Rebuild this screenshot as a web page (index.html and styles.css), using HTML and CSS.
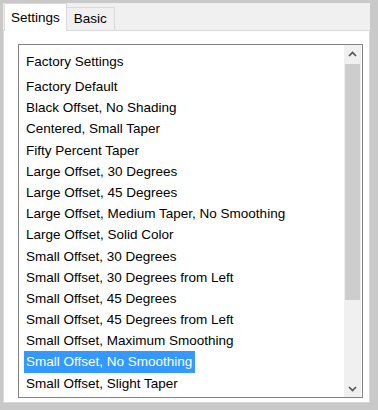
FILE: index.html
```
<!DOCTYPE html>
<html lang="en">
<head>
    <meta charset="UTF-8">
    <title>Settings</title>
    <link rel="stylesheet" href="styles.css">
</head>
<body>
    <div class="window">
        <div class="tabs">
            <div class="tab active">Settings</div>
            <div class="tab">Basic</div>
        </div>
        <div class="panel">
            <div class="listbox">
                <div class="items">
                    <div class="item header">Factory Settings</div>
                    <div class="item">Factory Default</div>
                    <div class="item">Black Offset, No Shading</div>
                    <div class="item">Centered, Small Taper</div>
                    <div class="item">Fifty Percent Taper</div>
                    <div class="item">Large Offset, 30 Degrees</div>
                    <div class="item">Large Offset, 45 Degrees</div>
                    <div class="item">Large Offset, Medium Taper, No Smoothing</div>
                    <div class="item">Large Offset, Solid Color</div>
                    <div class="item">Small Offset, 30 Degrees</div>
                    <div class="item">Small Offset, 30 Degrees from Left</div>
                    <div class="item">Small Offset, 45 Degrees</div>
                    <div class="item">Small Offset, 45 Degrees from Left</div>
                    <div class="item">Small Offset, Maximum Smoothing</div>
                    <div class="item selected">Small Offset, No Smoothing</div>
                    <div class="item">Small Offset, Slight Taper</div>
                </div>
                <div class="scrollbar">
                    <div class="arrow">
                        <svg width="9" height="6" viewBox="0 0 9 6"><path d="M1 5 L4.5 1.5 L8 5" fill="none" stroke="#555" stroke-width="1.7"/></svg>
                    </div>
                    <div class="track">
                        <div class="thumb"></div>
                    </div>
                    <div class="arrow">
                        <svg width="9" height="6" viewBox="0 0 9 6"><path d="M1 1 L4.5 4.5 L8 1" fill="none" stroke="#555" stroke-width="1.7"/></svg>
                    </div>
                </div>
            </div>
        </div>
    </div>
</body>
</html>
```

FILE: styles.css
```
body {
    margin: 0;
    width: 378px;
    height: 410px;
    background-color: #c9c9c9;
    font-family: 'Liberation Sans', Arial, sans-serif;
    overflow: hidden;
}

.window {
    margin: 3px 8px 7px 3px;
    height: 400px;
    display: flex;
    flex-direction: column;
    background-color: #f0f0f0;
}

.tabs {
    display: flex;
    align-items: flex-end;
    height: 27px;
    padding-left: 1px;
}

.tab {
    font-size: 13.5px;
    color: #000;
    padding: 0 7px;
    height: 23px;
    line-height: 22px;
    background-color: #f0f0f0;
    border: 1px solid #d9d9d9;
    border-bottom: none;
    box-sizing: border-box;
    margin-left: -1px;
}

.tab.active {
    height: 28px;
    line-height: 27px;
    background-color: #fff;
    position: relative;
    z-index: 1;
    margin-bottom: -1px;
    padding: 0 6px;
    margin-left: 0;
}

.panel {
    flex: 1;
    background-color: #fff;
    border: 1px solid #d9d9d9;
    padding: 13px 6px 4px 14px;
    display: flex;
}

.listbox {
    flex: 1;
    border: 1px solid #828282;
    display: flex;
    background-color: #fff;
}

.items {
    flex: 1;
    padding: 6px 0 0 5px;
    overflow: hidden;
}

.item {
    font-size: 13.5px;
    height: 21.2px;
    line-height: 21px;
    color: #000;
    padding: 0 3px 0 2px;
    width: max-content;
}

.item.header {
    height: 25px;
    line-height: 22px;
}

.item.selected {
    background-color: #3399ff;
    color: #fff;
}

.scrollbar {
    width: 17px;
    display: flex;
    flex-direction: column;
    background-color: #f0f0f0;
    margin-right: 1px;
}

.arrow {
    height: 17px;
    display: flex;
    align-items: center;
    justify-content: center;
}

.track {
    flex: 1;
    padding: 2px 1px;
}

.thumb {
    height: 236px;
    background-color: #cdcdcd;
}
```
